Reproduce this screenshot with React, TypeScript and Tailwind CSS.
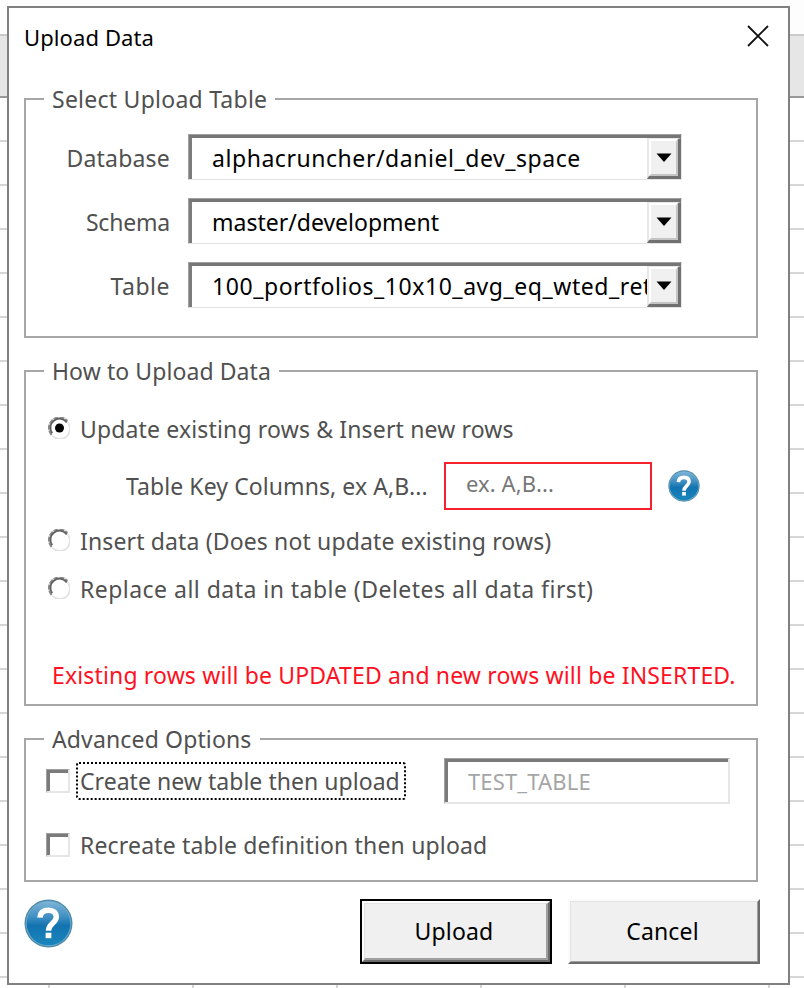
import type { ReactNode } from 'react';

const SHEET_ROWS = Array.from({ length: 21 }, (_, i) => i);

function Sheet() {
  return (
    <div className="flex h-full flex-col bg-white">
      <div className="h-[34px] shrink-0 bg-[#fdfdfd]" />
      <div className="h-[64px] shrink-0 border-t-2 border-b-2 border-t-[#cacaca] border-b-[#999] bg-[#e6e6e6]" />
      {SHEET_ROWS.map((i) => (
        <div key={i} className="flex h-[44px] shrink-0 border-b-2 border-[#d6d6d6]">
          <div className="w-[50px] border-r-2 border-[#d6d6d6]" />
          <div className="w-[144px] border-r-2 border-[#d6d6d6]" />
          <div className="w-[144px] border-r-2 border-[#d6d6d6]" />
          <div className="w-[144px] border-r-2 border-[#d6d6d6]" />
          <div className="w-[144px] border-r-2 border-[#d6d6d6]" />
          <div className="w-[144px] border-r-2 border-[#d6d6d6]" />
        </div>
      ))}
    </div>
  );
}

function Group({ title, className, children }: { title: string; className: string; children: ReactNode }) {
  return (
    <fieldset className={`w-[734px] border-2 border-[#a6a6a6] ${className}`}>
      <legend className="ml-[18px] h-[30px] px-2 leading-[31px] whitespace-nowrap">{title}</legend>
      {children}
    </fieldset>
  );
}

function SelectRow({ label, value, labelTracking, tracking }: { label: string; value: string; labelTracking: string; tracking: string }) {
  return (
    <div className="flex h-[46px] items-center gap-[18px]">
      <div className={`w-[144px] pt-[2px] text-right ${labelTracking}`}>{label}</div>
      <div className="h-[46px] w-[494px] border-t border-r border-b border-l border-t-[#a0a0a0] border-r-[#e8e8e8] border-b-[#e3e3e3] border-l-[#a0a0a0]">
        <div className="flex h-full border-t-[3px] border-l-[3px] border-t-[#757575] border-l-[#7c7c7c]">
          <div className={`min-w-0 flex-1 overflow-hidden pl-5 leading-[40px] whitespace-nowrap text-black ${tracking}`}>
            {value}
          </div>
          <div className="flex w-[34px] items-center justify-center border-t border-r-[3px] border-b-[3px] border-l-2 border-t-[#e8e8e8] border-r-[#707070] border-b-[#707070] border-l-[#e8e8e8]">
            <div className="flex h-full w-full items-center justify-center border-t-2 border-r-2 border-b-2 border-l-2 border-t-white border-r-[#c4c4c4] border-b-[#c4c4c4] border-l-white bg-[#f0f0f0]">
              <svg width="16" height="9" viewBox="0 0 16 9" className="shrink-0">
                <path d="M0.5 0.5H15.5L8 9Z" fill="#000" />
              </svg>
            </div>
          </div>
        </div>
      </div>
    </div>
  );
}

function Radio({ checked }: { checked?: boolean }) {
  return (
    <svg width="22" height="22" viewBox="0 0 22 22" className="relative -top-[1px] shrink-0">
      <path d="M19.2 5A10 10 0 0 1 4.4 18.8" fill="none" stroke="#e3e3e3" strokeWidth="1.8" />
      <path d="M3.6 18A9.9 9.9 0 0 1 19.4 4" fill="none" stroke="#8c8c8c" strokeWidth="2" strokeDasharray="5 1" />
      <path d="M4.2 16.2A8.6 8.6 0 0 1 18.8 5.4" fill="none" stroke="#606060" strokeWidth="1.8" />
      {checked && <circle cx="11.5" cy="11" r="4.5" fill="#000" />}
    </svg>
  );
}

function Option({ label, checked, className, tracking }: { label: string; checked?: boolean; className: string; tracking: string }) {
  return (
    <div className={`flex h-[34px] items-center gap-[10px] pl-[22px] whitespace-nowrap ${className}`}>
      <Radio checked={checked} />
      <span className={tracking}>{label}</span>
    </div>
  );
}

function Checkbox() {
  return (
    <div className="h-6 w-6 shrink-0 border-t border-r-2 border-b-2 border-l border-t-[#a0a0a0] border-r-[#e6e6e6] border-b-[#e6e6e6] border-l-[#a0a0a0]">
      <div className="h-full border-t-[3px] border-l-[3px] border-[#7a7a7a]" />
    </div>
  );
}

function HelpIcon({ size, id }: { size: number; id: string }) {
  return (
    <svg width={size} height={size} viewBox="0 0 48 48" className="shrink-0">
      <defs>
        <linearGradient id={id} x1="0" y1="0" x2="0" y2="1">
          <stop offset="0" stopColor="#7db4d6" />
          <stop offset="0.35" stopColor="#3f8fc2" />
          <stop offset="0.55" stopColor="#1273b0" />
          <stop offset="1" stopColor="#1a86bd" />
        </linearGradient>
      </defs>
      <circle cx="24" cy="24" r="23.5" fill="#4d88a8" />
      <circle cx="24" cy="24" r="22.2" fill="#6fadcc" />
      <circle cx="24" cy="24" r="21.4" fill={`url(#${id})`} />
      <path
        d="M15.6 18.2C16 12.4 19.6 11 24 11C29 11 31.6 13.6 31.6 17.6C31.6 23.6 24 24 24 31"
        fill="none"
        stroke="#fff"
        strokeWidth="5.4"
      />
      <rect x="21.2" y="33" width="5.6" height="5.4" fill="#fff" />
    </svg>
  );
}

export default function App() {
  return (
    <div className="relative h-[988px] w-[804px] overflow-hidden font-['Noto_Sans',sans-serif] text-[23px] text-[#505050]">
      <Sheet />
      <div className="absolute top-[6px] left-[7px] flex h-[979px] w-[783px] flex-col border-2 border-[#808080] bg-white pl-[15px]">
        <div className="flex h-[76px] shrink-0 justify-between pr-[19px]">
          <h1 className="h-[58px] text-[22px] leading-[58px] tracking-[0.1px] text-black">Upload Data</h1>
          <svg width="22" height="22" viewBox="0 0 22 22" className="mt-[17px]">
            <path d="M1 1L21 21M21 1L1 21" stroke="#111" strokeWidth="1.8" />
          </svg>
        </div>

        <Group title="Select Upload Table" className="h-[254px] shrink-0 tracking-[0.25px]">
          <div className="flex flex-col gap-[18px] pt-5">
            <SelectRow label="Database" value="alphacruncher/daniel_dev_space" labelTracking="tracking-[0.2px]" tracking="tracking-[0.55px]" />
            <SelectRow label="Schema" value="master/development" labelTracking="tracking-[-0.2px]" tracking="tracking-[0px]" />
            <SelectRow label="Table" value="100_portfolios_10x10_avg_eq_wted_ret" labelTracking="tracking-[0.5px]" tracking="tracking-[0.56px]" />
          </div>
        </Group>

        <Group title="How to Upload Data" className="mt-[18px] h-[350px] shrink-0 tracking-[0.08px]">
          <Option className="mt-[26px]" checked label="Update existing rows & Insert new rows" tracking="tracking-[0.15px]" />
          <div className="mt-4 flex h-12 items-center">
            <span className="w-[418px] pl-[100px] whitespace-nowrap">Table Key Columns, ex A,B...</span>
            <div className="h-12 w-[208px] border-2 border-[#f5222d] pl-5 text-[22px] leading-[39px] tracking-[0.1px] text-[#777]">ex. A,B...</div>
            <div className="ml-4">
              <HelpIcon size={32} id="help-small" />
            </div>
          </div>
          <Option className="mt-[14px]" label="Insert data (Does not update existing rows)" tracking="tracking-[0.14px]" />
          <Option className="mt-[14px]" label="Replace all data in table (Deletes all data first)" tracking="tracking-[0.47px]" />
          <p className="mt-[52px] h-[34px] pl-[26px] leading-[34px] tracking-[0.15px] whitespace-nowrap text-[#ff1022]">
            Existing rows will be UPDATED and new rows will be INSERTED.
          </p>
        </Group>

        <Group title="Advanced Options" className="mt-[18px] h-[158px] shrink-0 tracking-[0.14px]">
          <div className="mt-1 flex h-[46px] items-center pl-5">
            <Checkbox />
            <div className="ml-[6px] h-[38px] w-[330px] rounded-[3px] border-2 border-dotted border-black pl-[2px] leading-[34px] tracking-[0.04px] whitespace-nowrap">
              Create new table then upload
            </div>
            <div className="ml-[38px] h-[46px] w-[286px] border-t border-r-2 border-b-2 border-l border-t-[#a0a0a0] border-r-[#e6e6e6] border-b-[#e6e6e6] border-l-[#a0a0a0]">
              <div className="h-full border-t-[3px] border-l-[3px] border-[#7a7a7a] pl-5 text-[22px] leading-[38px] text-[#a5a5a5]">
                TEST_TABLE
              </div>
            </div>
          </div>
          <div className="mt-6 flex h-[34px] items-center gap-[10px] pl-5 tracking-[0.17px]">
            <Checkbox />
            <span>Recreate table definition then upload</span>
          </div>
        </Group>

        <div className="mt-[17px] flex items-start text-black">
          <HelpIcon size={49} id="help-large" />
          <button className="ml-[287px] h-[65px] w-[192px] border-2 border-black">
            <span className="flex h-full border-t-2 border-r-2 border-b-2 border-l-2 border-t-white border-r-[#6c6c6c] border-b-[#6c6c6c] border-l-white">
              <span className="flex w-full items-center justify-center border-t border-r-2 border-b-2 border-l border-t-[#e3e3e3] border-r-[#a0a0a0] border-b-[#a0a0a0] border-l-[#e3e3e3] bg-[#f0f0f0] pr-[3px] tracking-[0.15px]">
                Upload
              </span>
            </span>
          </button>
          <button className="ml-4 h-[65px] w-[192px] border-t-2 border-r-2 border-b-2 border-l-2 border-t-[#fafafa] border-r-[#6c6c6c] border-b-[#6c6c6c] border-l-[#fafafa]">
            <span className="flex h-full items-center justify-center border-t border-r border-b border-l border-t-[#e3e3e3] border-r-[#a0a0a0] border-b-[#a0a0a0] border-l-[#e3e3e3] bg-[#f0f0f0] pr-[3px] tracking-[0.15px]">
              Cancel
            </span>
          </button>
        </div>
      </div>
    </div>
  );
}
